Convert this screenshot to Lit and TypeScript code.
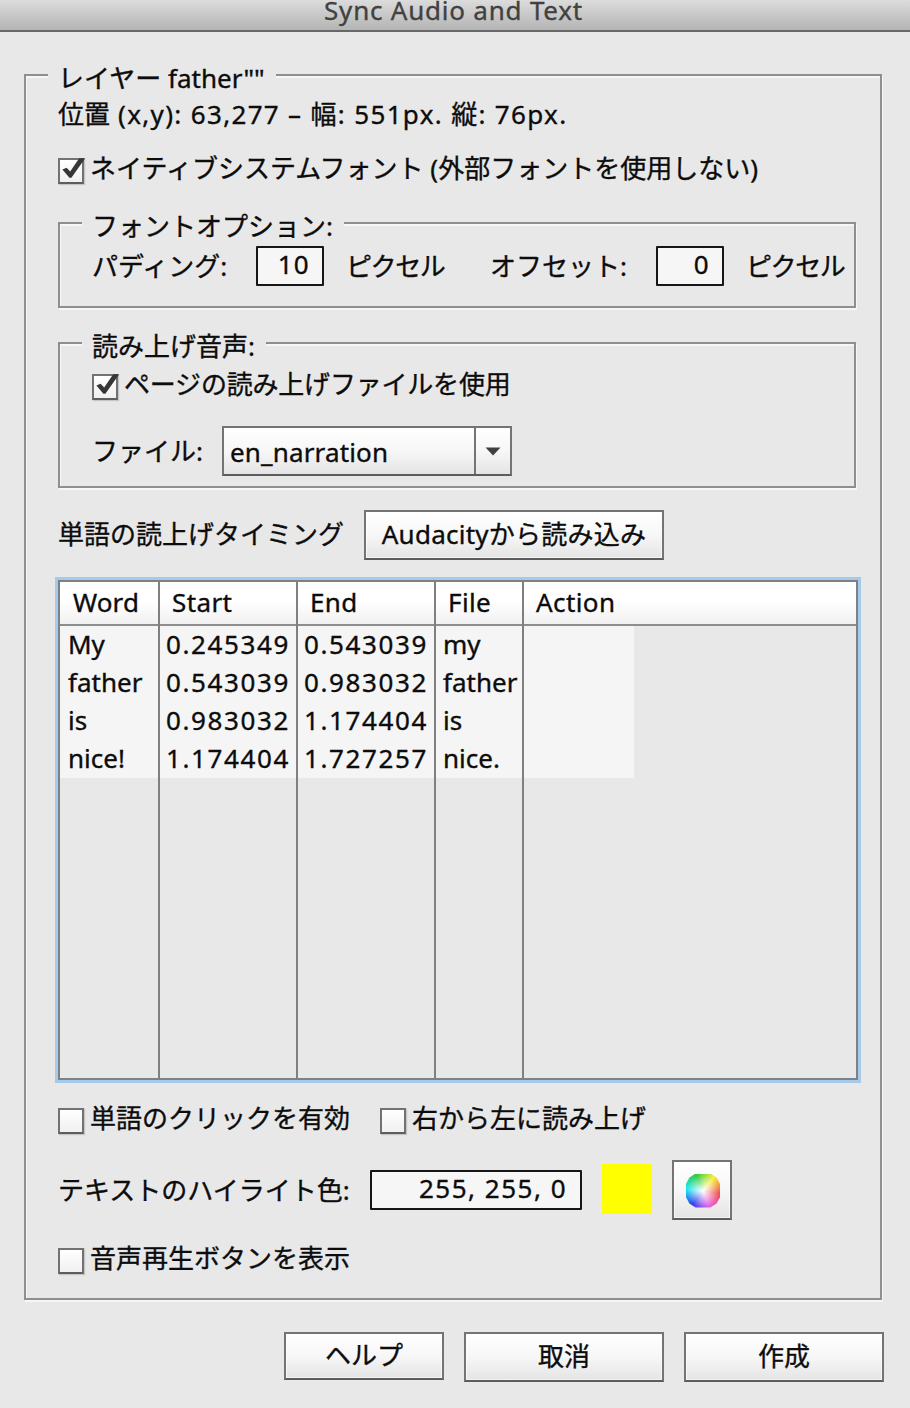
import { LitElement, html, css, nothing } from "lit";
import { customElement, property } from "lit/decorators.js";

@customElement("check-box")
class CheckBox extends LitElement {
  @property({ type: Boolean }) checked = false;

  static styles = css`
    :host {
      display: flex;
      align-items: flex-start;
      height: 34px;
    }
    .box {
      box-sizing: border-box;
      width: 26px;
      height: 26px;
      margin-top: 4px;
      border: 2px solid #727272;
      border-bottom-color: #5e5e5e;
      background: linear-gradient(#ffffff, #f0f0f0);
      box-shadow: 1px 1px 1px rgba(0, 0, 0, 0.15);
    }
    svg {
      display: block;
      overflow: visible;
    }
    .label {
      margin-left: 6px;
      line-height: 28px;
      white-space: nowrap;
    }
  `;

  render() {
    return html`
      <span class="box">
        ${this.checked
          ? html`<svg width="22" height="22" viewBox="0 0 22 22">
              <path d="M2.4 9.4 L6.6 7.8 L10.2 11.6 L19.2 -1.8 L25.2 -1.8 L11.4 17.8 L9.4 17.8 Z" fill="#363636" />
            </svg>`
          : nothing}
      </span>
      <span class="label"><slot></slot></span>
    `;
  }
}

@customElement("group-box")
class GroupBox extends LitElement {
  @property() heading = "";

  static styles = css`
    :host {
      display: flex;
      flex-direction: column;
      box-sizing: border-box;
      border: 2px solid #8f8f8f;
      box-shadow: 1px 2px 0 #f6f6f6, inset 1px 2px 0 #f6f6f6;
    }
    .legend {
      align-self: flex-start;
      height: 30px;
      line-height: 30px;
      margin: -13px 0 0 22px;
      padding: 0 11px 0 10px;
      background: #e8e8e8;
      white-space: nowrap;
    }
  `;

  render() {
    return html`<div class="legend">${this.heading}</div><slot></slot>`;
  }
}

interface Cue {
  word: string;
  start: string;
  end: string;
  file: string;
}

const CUES: Cue[] = [
  { word: "My", start: "0.245349", end: "0.543039", file: "my" },
  { word: "father", start: "0.543039", end: "0.983032", file: "father" },
  { word: "is", start: "0.983032", end: "1.174404", file: "is" },
  { word: "nice!", start: "1.174404", end: "1.727257", file: "nice." },
];

@customElement("app-root")
class AppRoot extends LitElement {
  static styles = css`
    :host {
      display: block;
      box-sizing: border-box;
      width: 910px;
      height: 1408px;
      background: #e8e8e8;
      color: #0c0c0c;
      font: 26px/30px "Noto Sans", "Noto Sans CJK JP", sans-serif;
      -webkit-text-stroke: 0.35px currentColor;
    }
    .titlebar {
      box-sizing: border-box;
      height: 32px;
      border-bottom: 2px solid #676767;
      background: linear-gradient(#dcdcdc, #b4b4b4);
      color: #414141;
      text-align: center;
      line-height: 21px;
      padding-right: 3px;
      letter-spacing: 0.78px;
    }
    .main {
      width: 858px;
      height: 1226px;
      margin: 42px 0 0 24px;
    }
    .content {
      display: flex;
      flex-direction: column;
      padding-left: 32px;
    }
    .position {
      margin-top: 6px;
      height: 31px;
      white-space: nowrap;
    }
    .coords {
      letter-spacing: 1.33px;
    }
    .native {
      margin-top: 24px;
    }
    .group {
      width: 798px;
    }
    .font-group {
      height: 86px;
      margin-top: 34px;
    }
    .font-row {
      display: grid;
      grid-template-columns: 164px 90px 144px 166px 90px auto;
      align-items: center;
      margin: 5px 0 0 32px;
      height: 40px;
      white-space: nowrap;
    }
    .unit {
      letter-spacing: -1.4px;
    }
    .field {
      box-sizing: border-box;
      width: 68px;
      height: 40px;
      border: 2px solid #161616;
      border-radius: 1px;
      background: #f6f6f6;
      padding-right: 12px;
      text-align: right;
      line-height: 33px;
      letter-spacing: 1.3px;
    }
    .audio-group {
      height: 146px;
      margin-top: 34px;
    }
    .page-audio {
      margin: 9px 0 0 32px;
      letter-spacing: -0.2px;
    }
    .file-row {
      display: flex;
      align-items: center;
      margin: 22px 0 0 32px;
    }
    .file-label {
      width: 130px;
    }
    .select {
      box-sizing: border-box;
      display: flex;
      width: 290px;
      height: 50px;
      border: 2px solid #747474;
      border-bottom-color: #5c5c5c;
      background: linear-gradient(#ffffff 0%, #f7f7f7 50%, #e4e4e4 100%);
      line-height: 49px;
    }
    .select-value {
      width: 252px;
      box-sizing: border-box;
      padding-left: 6px;
      border-right: 2px solid #747474;
      letter-spacing: 0.15px;
    }
    .select-arrow {
      flex: 1;
      display: flex;
      align-items: center;
      justify-content: center;
    }
    .timing {
      display: flex;
      align-items: center;
      margin-top: 22px;
      height: 50px;
    }
    .timing-label {
      width: 306px;
      margin-top: -2px;
      white-space: nowrap;
    }
    .btn {
      box-sizing: border-box;
      display: flex;
      align-items: center;
      justify-content: center;
      height: 50px;
      border: 2px solid #747474;
      border-bottom-color: #5c5c5c;
      background: linear-gradient(#ffffff 0%, #f7f7f7 50%, #e4e4e4 100%);
      box-shadow: inset 0 0 0 1px rgba(255, 255, 255, 0.6);
      padding-bottom: 2px;
      white-space: nowrap;
    }
    .import {
      width: 300px;
      letter-spacing: 0.25px;
    }
    .table {
      box-sizing: border-box;
      width: 800px;
      height: 500px;
      margin-top: 20px;
      border: 2px solid #7d8084;
      box-shadow: 0 0 0 3px #a6cbea;
      display: grid;
      grid-template-columns: 100px 138px 138px 88px 332px;
    }
    .column {
      border-right: 2px solid #808080;
    }
    .column:last-child {
      border-right: none;
    }
    .head {
      box-sizing: border-box;
      height: 44px;
      padding-left: 12px;
      border-bottom: 2px solid #8d8d8d;
      background: linear-gradient(#ffffff 45%, #f1f1f1);
      line-height: 41px;
      letter-spacing: 0.4px;
    }
    .column:first-child .head {
      padding-left: 13px;
      letter-spacing: 0.1px;
    }
    .cell {
      height: 38px;
      padding-left: 7px;
      background: #f5f5f5;
      line-height: 37px;
      white-space: nowrap;
    }
    .column:first-child .cell {
      padding-left: 8px;
    }
    .num {
      padding-left: 6px;
      letter-spacing: 1.6px;
    }
    .action {
      width: 103px;
    }
    .options {
      display: flex;
      margin-top: 24px;
    }
    .clickable {
      width: 322px;
    }
    .colour-row {
      display: flex;
      align-items: center;
      margin-top: 22px;
      height: 60px;
    }
    .colour-label {
      width: 312px;
      white-space: nowrap;
    }
    .rgb {
      width: 212px;
      padding-right: 13px;
      letter-spacing: 1.5px;
    }
    .swatch {
      width: 50px;
      height: 50px;
      margin: 0 20px 2px;
      background: #ffff00;
    }
    .picker {
      width: 60px;
      height: 60px;
      padding: 0;
    }
    .wheel {
      width: 34px;
      height: 34px;
      margin: 1px 0 0 2px;
      clip-path: polygon(28% 0, 72% 0, 90% 12%, 100% 30%, 100% 70%, 90% 88%, 72% 100%, 28% 100%, 10% 88%, 0 70%, 0 30%, 10% 12%);
      background: radial-gradient(circle, #ffffff 0%, rgba(255, 255, 255, 0) 68%),
        conic-gradient(from 98deg, #f05050, #e860e8 60deg, #3040f0 120deg, #20e8f0 180deg, #30cc40 240deg, #f8f040 300deg, #f05050);
    }
    .play {
      margin-top: 24px;
    }
    .buttons {
      display: flex;
      gap: 20px;
      margin: 32px 0 0 284px;
      align-items: flex-start;
    }
    .help {
      width: 160px;
      height: 48px;
    }
    .wide {
      width: 200px;
    }
  `;

  private column(title: string, key: keyof Cue, numeric = false) {
    return html`<div class="column">
      <div class="head">${title}</div>
      ${CUES.map((c) => html`<div class=${numeric ? "cell num" : "cell"}>${c[key]}</div>`)}
    </div>`;
  }

  render() {
    return html`
      <div class="titlebar">Sync Audio and Text</div>
      <group-box class="main" heading=${'レイヤー father""'}>
        <div class="content">
          <div class="position">位置<span class="coords"> (x,y): 63,277 – 幅: 551px. 縦: 76px.</span></div>
          <check-box class="native" checked>ネイティブシステムフォント (外部フォントを使用しない)</check-box>
          <group-box class="group font-group" heading="フォントオプション:">
            <div class="font-row">
              <span>パディング:</span>
              <div class="field">10</div>
              <span class="unit">ピクセル</span>
              <span>オフセット:</span>
              <div class="field">0</div>
              <span class="unit">ピクセル</span>
            </div>
          </group-box>
          <group-box class="group audio-group" heading="読み上げ音声:">
            <check-box class="page-audio" checked>ページの読み上げファイルを使用</check-box>
            <div class="file-row">
              <span class="file-label">ファイル:</span>
              <div class="select">
                <span class="select-value">en_narration</span>
                <span class="select-arrow">
                  <svg width="16" height="9" viewBox="0 0 16 9"><path d="M0.5 0.5 H15.5 L8 8.5 Z" fill="#404040" /></svg>
                </span>
              </div>
            </div>
          </group-box>
          <div class="timing">
            <span class="timing-label">単語の読上げタイミング</span>
            <div class="btn import">Audacityから読み込み</div>
          </div>
          <div class="table">
            ${this.column("Word", "word")} ${this.column("Start", "start", true)}
            ${this.column("End", "end", true)} ${this.column("File", "file")}
            <div class="column">
              <div class="head">Action</div>
              ${CUES.map(() => html`<div class="cell action"></div>`)}
            </div>
          </div>
          <div class="options">
            <check-box class="clickable">単語のクリックを有効</check-box>
            <check-box>右から左に読み上げ</check-box>
          </div>
          <div class="colour-row">
            <span class="colour-label">テキストのハイライト色:</span>
            <div class="field rgb">255, 255, 0</div>
            <div class="swatch"></div>
            <div class="btn picker"><div class="wheel"></div></div>
          </div>
          <check-box class="play">音声再生ボタンを表示</check-box>
        </div>
      </group-box>
      <div class="buttons">
        <div class="btn help">ヘルプ</div>
        <div class="btn wide">取消</div>
        <div class="btn wide">作成</div>
      </div>
    `;
  }
}
